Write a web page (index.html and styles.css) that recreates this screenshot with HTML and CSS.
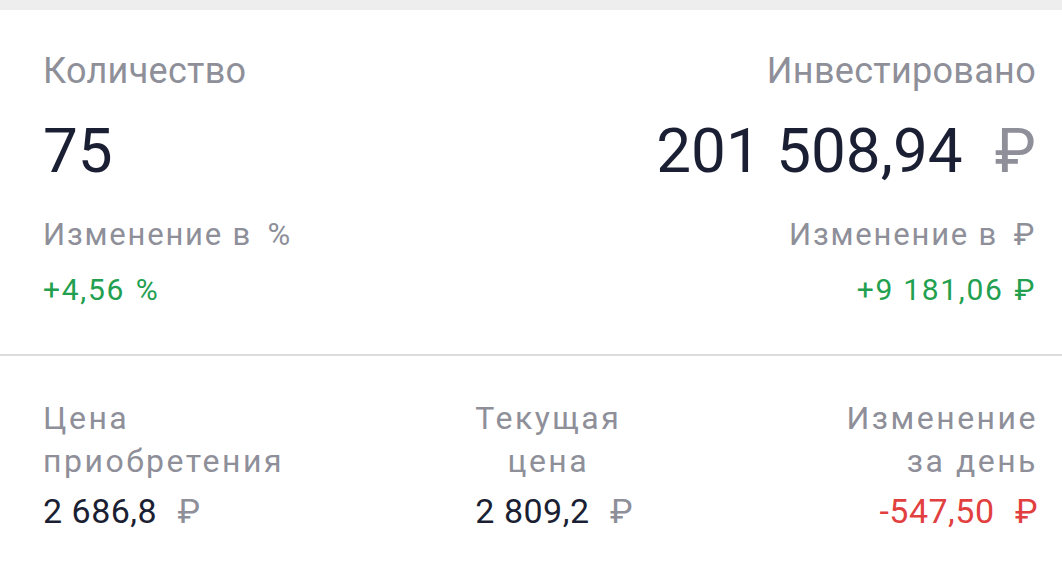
FILE: index.html
```html
<!DOCTYPE html>
<html lang="ru">
<head>
  <meta charset="UTF-8" />
  <meta name="viewport" content="width=device-width, initial-scale=1.0"/>
  <title>Позиция</title>
  <link rel="stylesheet" href="styles.css">
</head>
<body>
  <div class="topbar"></div>

  <div class="summary">
    <div class="col">
      <div class="label">Количество</div>
      <div class="big">75</div>
      <div class="sublabel">Изменение в<span class="unit">%</span></div>
      <div class="change up">+4,56<span class="unit">%</span></div>
    </div>
    <div class="col right">
      <div class="label">Инвестировано</div>
      <div class="big">201 508,94<span class="unit gray">₽</span></div>
      <div class="sublabel">Изменение в<span class="unit">₽</span></div>
      <div class="change up">+9 181,06<span class="unit">₽</span></div>
    </div>
  </div>

  <hr />

  <div class="prices">
    <div class="col">
      <div class="plabel">Цена<br>приобретения</div>
      <div class="pvalue">2 686,8<span class="unit gray">₽</span></div>
    </div>
    <div class="col mid">
      <div class="plabel center">Текущая<br>цена</div>
      <div class="pvalue">2 809,2<span class="unit gray">₽</span></div>
    </div>
    <div class="col right">
      <div class="plabel">Изменение<br>за день</div>
      <div class="pvalue down">-547,50<span class="unit">₽</span></div>
    </div>
  </div>
</body>
</html>
```

FILE: styles.css
```css
body {
  font-family: Roboto, "Noto Sans", sans-serif;
  background-color: #ffffff;
  margin: 0;
  color: #1b1f33;
}

.topbar {
  height: 10px;
  background-color: #eeeeee;
}

.summary {
  display: flex;
  justify-content: space-between;
  padding: 39px 26px 0 43px;
}

.col {
  display: flex;
  flex-direction: column;
  align-items: flex-start;
}

.col.right {
  align-items: flex-end;
  text-align: right;
}

.label {
  font-size: 36px;
  line-height: 44px;
  letter-spacing: 0.3px;
  color: #8e8f99;
}

.big {
  font-size: 62px;
  line-height: 72px;
  margin-top: 22px;
}

.big .unit {
  margin-left: 0.52em;
}

.sublabel {
  font-size: 31px;
  line-height: 40px;
  letter-spacing: 1.8px;
  margin-top: 28px;
  color: #8e8f99;
}

.sublabel .unit {
  margin-left: 0.5em;
}

.change {
  font-size: 30px;
  line-height: 40px;
  letter-spacing: 1.7px;
  margin-top: 15px;
}

.change .unit {
  margin-left: 0.36em;
}

.gray {
  color: #8e8f99;
}

.up {
  color: #22a04f;
}

.down {
  color: #e2403f;
}

hr {
  border: none;
  height: 2px;
  background-color: #dcdcdc;
  margin: 44px 0 0 0;
}

.prices {
  display: flex;
  justify-content: space-between;
  padding: 41px 26px 0 43px;
}

.prices .mid {
  margin-right: 22px;
}

.plabel {
  font-size: 32px;
  line-height: 43px;
  letter-spacing: 2.5px;
  color: #8e8f99;
}

.plabel.center {
  text-align: center;
}

.col.right .plabel,
.col.right .pvalue {
  margin-right: -2px;
}

.pvalue {
  font-size: 34px;
  line-height: 44px;
  letter-spacing: 0.5px;
  margin-top: 6px;
}

.pvalue .unit {
  margin-left: 0.6em;
}
```
